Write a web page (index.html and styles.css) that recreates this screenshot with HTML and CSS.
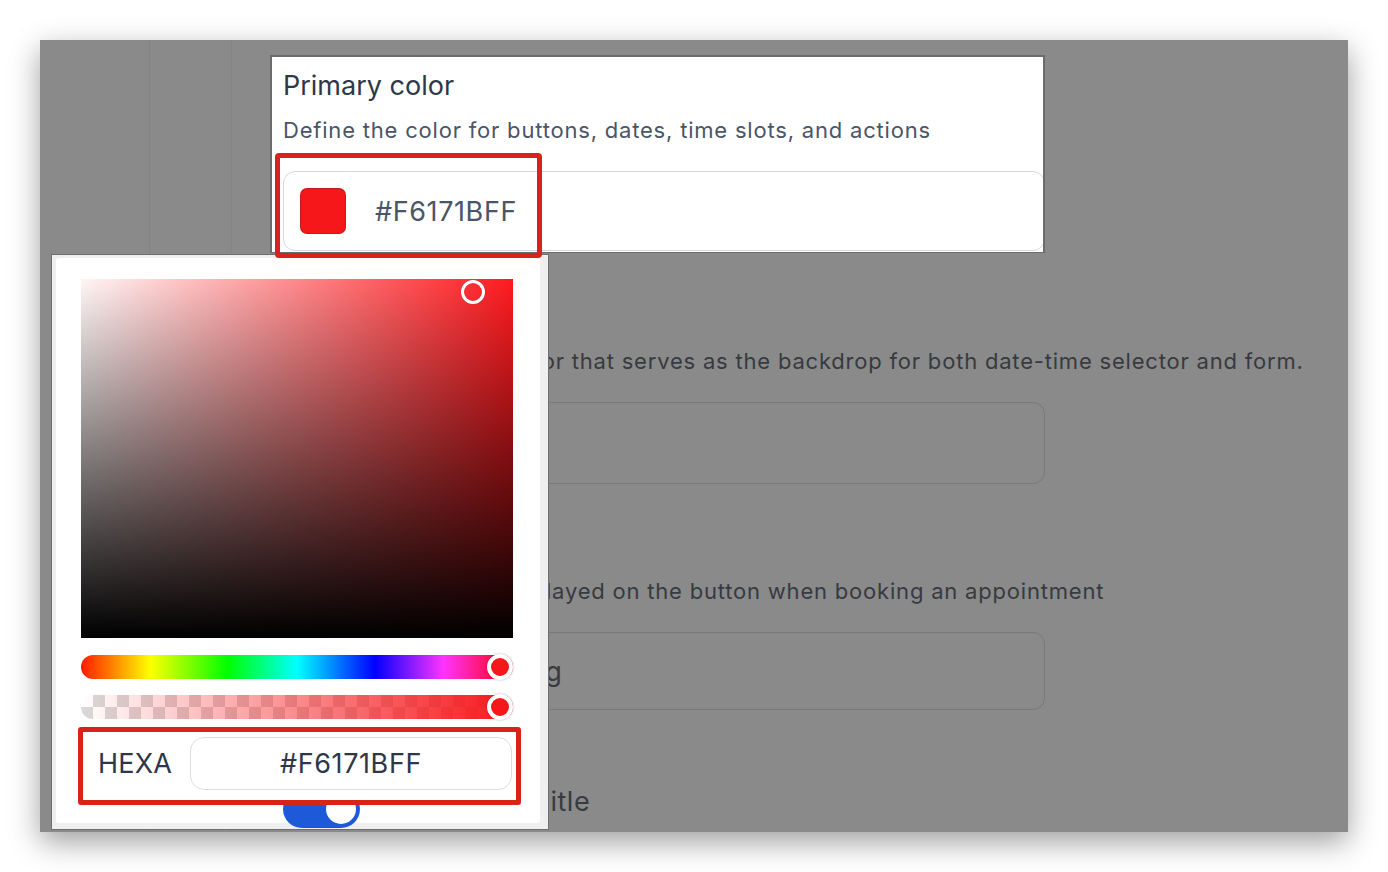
FILE: index.html
```html
<!DOCTYPE html>
<html lang="en">
<head>
<meta charset="utf-8">
<title>Primary color picker</title>
<link rel="stylesheet" href="styles.css">
</head>
<body>
<div class="page">
  <div class="frame">
    <aside class="rail"></aside>
    <aside class="subrail"></aside>
    <main class="content">
      <section class="card">
        <h2 class="title">Primary color</h2>
        <p class="desc">Define the color for buttons, dates, time slots, and actions</p>
        <div class="input color-input">
          <span class="swatch"></span>
          <span class="hex">#F6171BFF</span>
        </div>
      </section>
      <section class="field dim">
        <h2 class="title">Background color</h2>
        <p class="desc">Set the background color that serves as the backdrop for both date-time selector and form.</p>
        <div class="input"></div>
      </section>
      <section class="field dim field-button">
        <h2 class="title">Button text</h2>
        <p class="desc">Customize the text displayed on the button when booking an appointment</p>
        <div class="input"><span class="val">Schedule a Meeting</span></div>
      </section>
      <div class="toggle-row">
        <span class="toggle"><span class="toggle-knob"></span></span>
        <span class="toggle-label">Show Form Title</span>
      </div>
    </main>

    <div class="mark mark-primary"></div>

    <div class="picker">
      <div class="picker-panel">
        <div class="sat"><span class="knob-sat"></span></div>
        <div class="slider hue"><span class="knob"></span></div>
        <div class="slider alpha"><span class="knob"></span></div>
        <div class="hexa-mark">
          <span class="hexa-label">HEXA</span>
          <span class="hexa-input">#F6171BFF</span>
        </div>
      </div>
    </div>
  </div>
</div>
</body>
</html>
```

FILE: styles.css
```css
html, body {
  margin: 0;
  padding: 0;
  background: #ffffff;
}

body {
  font-family: "Inter", "Liberation Sans", sans-serif;
}

.page {
  padding: 40px;
}

.frame {
  position: relative;
  z-index: 0;
  width: 1308px;
  height: 792px;
  background: #8a8a8a;
  overflow: hidden;
  display: flex;
  box-shadow: 0 10px 28px rgba(0, 0, 0, 0.38);
}

.rail {
  width: 110px;
  flex: none;
  border-right: 1px solid #838383;
  box-sizing: border-box;
}

.subrail {
  width: 82px;
  flex: none;
  border-right: 1px solid #848484;
  box-sizing: border-box;
}

.content {
  padding: 15px 0 0 38px;
  display: flex;
  flex-direction: column;
}

.content > .card,
.content > .field,
.content > .toggle-row {
  flex: none;
}

.title {
  margin: 0;
  font-size: 27px;
  line-height: 32px;
  font-weight: 400;
  color: #2d3748;
}

.desc {
  margin: 14px 0 0;
  font-size: 22px;
  line-height: 28px;
  letter-spacing: 0.8px;
  color: #4a5568;
  white-space: nowrap;
}

.input {
  box-sizing: border-box;
  width: 762px;
  height: 80px;
  margin-top: 27px;
  border: 1px solid #d5d7db;
  border-radius: 12px;
  background: #ffffff;
  display: flex;
  align-items: center;
}

.card {
  box-sizing: border-box;
  width: 775px;
  height: 198px;
  background: #ffffff;
  border: 2px solid #6c6c6e;
  border-bottom-width: 1px;
  padding: 13px 0 0 11px;
  overflow: hidden;
}

.color-input {
  padding-left: 16px;
  gap: 29px;
}

.swatch {
  width: 46px;
  height: 46px;
  box-sizing: border-box;
  border-radius: 7px;
  background: #f6171b;
  border: 1px solid rgba(120, 40, 40, 0.45);
}

.hex {
  font-size: 27px;
  letter-spacing: 0.6px;
  color: #4a5568;
}

.field {
  width: 775px;
  box-sizing: border-box;
  padding-left: 13px;
  margin-top: 48px;
}

.field-button {
  margin-top: 47px;
}

.dim .title,
.dim .desc,
.dim .val {
  color: #373a40;
}

.dim .input {
  background: transparent;
  border-color: #797979;
  height: 82px;
  padding-left: 16px;
}

.field-button .input {
  height: 78px;
}

.val {
  font-size: 27px;
  letter-spacing: 0.5px;
}

.toggle-row {
  display: flex;
  align-items: center;
  gap: 16px;
  margin-top: 75px;
  padding-left: 13px;
}

.toggle {
  position: relative;
  z-index: 1;
  width: 77px;
  height: 38px;
  border-radius: 19px;
  background: #1d5ad8;
  flex: none;
}

.toggle-knob {
  position: absolute;
  right: 4px;
  top: 4px;
  width: 30px;
  height: 30px;
  border-radius: 50%;
  background: #ffffff;
}

.toggle-label {
  font-size: 27px;
  letter-spacing: 0.5px;
  color: #373a40;
  margin-bottom: 14px;
}

.mark {
  position: absolute;
  z-index: 2;
  box-sizing: border-box;
  border: 5px solid #d8231b;
  border-radius: 4px;
}

.mark-primary {
  left: 235px;
  top: 113px;
  width: 267px;
  height: 105px;
}

.picker {
  position: absolute;
  left: 11px;
  top: 214px;
  width: 498px;
  height: 576px;
  box-sizing: border-box;
  border: 1px solid #6e6e70;
  background: #efefef;
  padding: 3px 8px 6px 4px;
}

.picker-panel {
  box-sizing: border-box;
  height: 100%;
  background: #ffffff;
  border-radius: 3px;
  padding: 21px 0 0 25px;
  display: flex;
  flex-direction: column;
}

.sat {
  position: relative;
  width: 432px;
  height: 359px;
  flex: none;
  background:
    linear-gradient(to top, #000000, rgba(0, 0, 0, 0)),
    linear-gradient(to right, #fff6f6, #ff1a1f);
}

.knob-sat {
  position: absolute;
  left: 380px;
  top: 1px;
  width: 24px;
  height: 24px;
  box-sizing: border-box;
  border: 3px solid #ffffff;
  border-radius: 50%;
  box-shadow: 0 0 1px rgba(0, 0, 0, 0.4);
}

.slider {
  position: relative;
  width: 432px;
  height: 24px;
  border-radius: 12px;
  flex: none;
}

.hue {
  margin-top: 17px;
  background: linear-gradient(to right, #ff1a00 0%, #ffff00 16%, #00ff00 34%, #00ffff 50%, #0000ff 68%, #ff33ff 84%, #ff0000 100%);
}

.alpha {
  margin-top: 16px;
  background:
    linear-gradient(to right, rgba(246, 23, 27, 0), #f6171b),
    repeating-conic-gradient(#d9d9d9 0 25%, #ffffff 0 50%) 0 0 / 24px 24px;
}

.knob {
  position: absolute;
  right: 0;
  top: -1px;
  width: 26px;
  height: 26px;
  box-sizing: border-box;
  border-radius: 50%;
  border: 4px solid #ffffff;
  background: #f6171b;
  box-shadow: 0 0 2px rgba(0, 0, 0, 0.35);
}

.hexa-mark {
  position: relative;
  z-index: 2;
  box-sizing: border-box;
  width: 443px;
  height: 78px;
  margin: 8px 0 0 -3px;
  border: 5px solid #d8231b;
  border-radius: 3px;
  background: #ffffff;
  display: flex;
  align-items: flex-start;
  padding: 5px 4px 0 15px;
}

.hexa-label {
  font-size: 27px;
  line-height: 53px;
  letter-spacing: 0.2px;
  color: #2d3748;
}

.hexa-input {
  margin-left: auto;
  box-sizing: border-box;
  width: 322px;
  height: 53px;
  border: 1px solid #dcdde0;
  border-radius: 14px;
  display: flex;
  align-items: center;
  justify-content: center;
  font-size: 27px;
  letter-spacing: 0.6px;
  color: #2d3748;
}
```
